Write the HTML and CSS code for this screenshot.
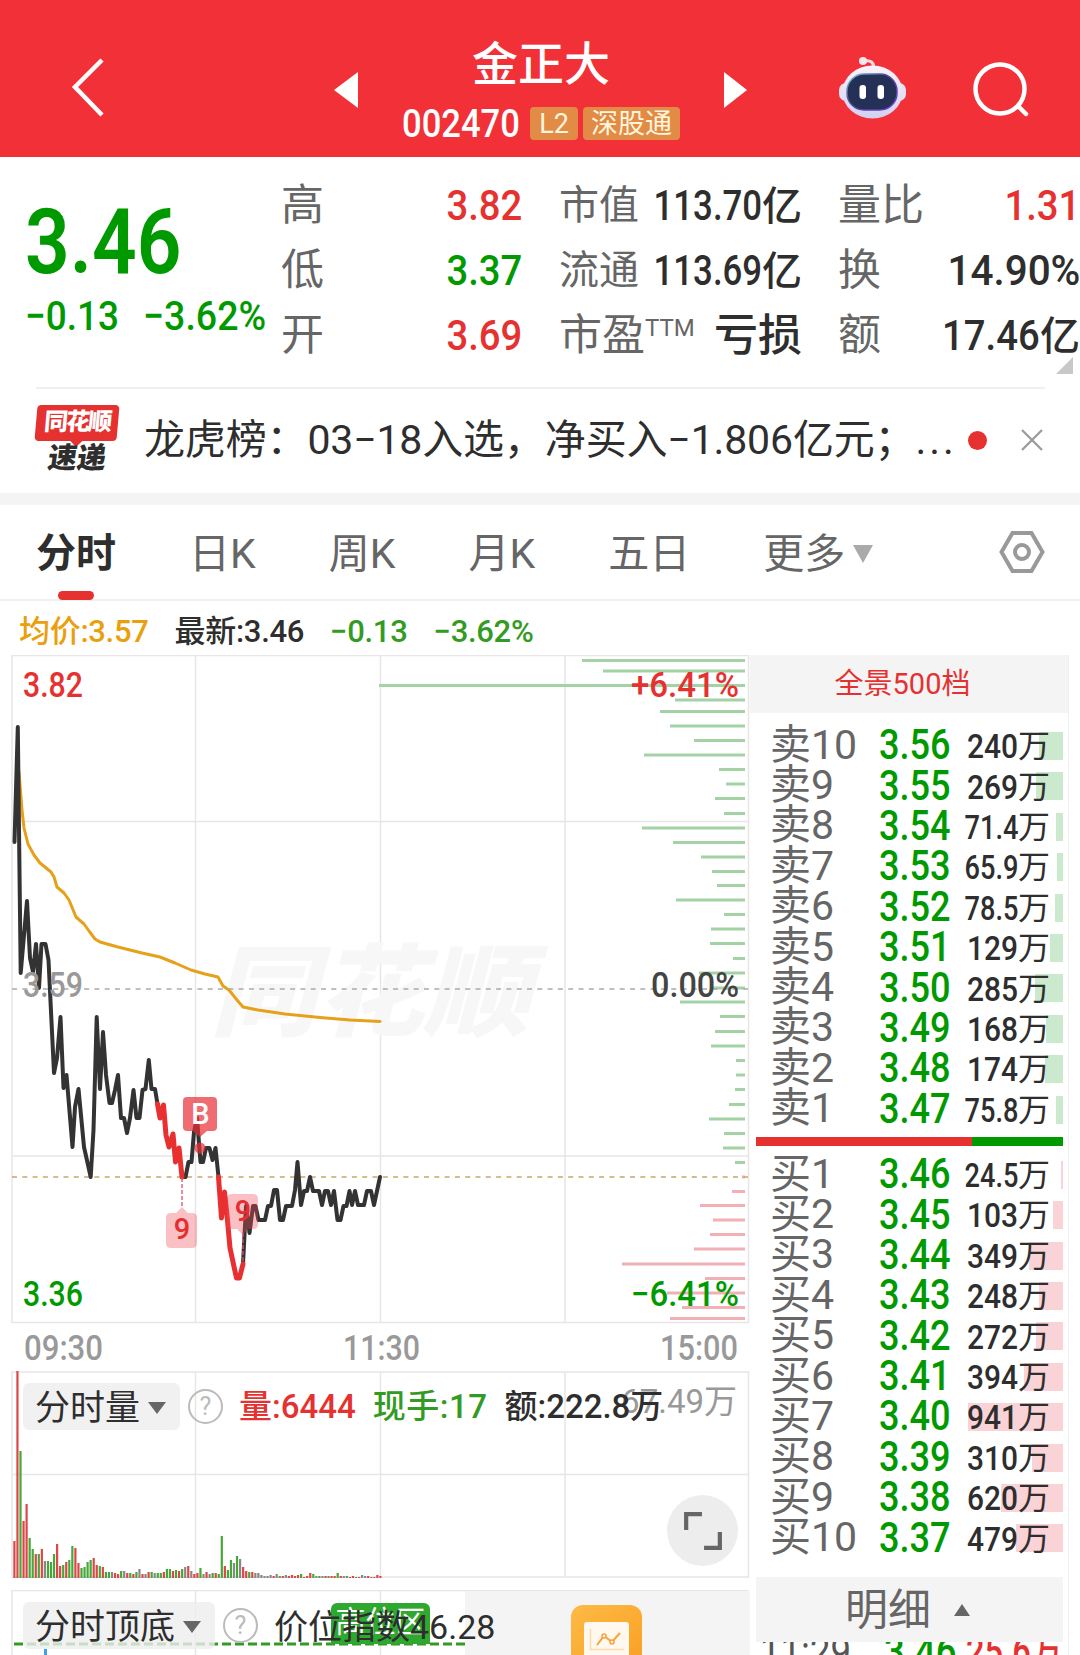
FILE: index.html
```
<!DOCTYPE html>
<html lang="zh-CN">

<head>
  <meta charset="UTF-8" />
  <meta name="viewport" content="width=device-width, initial-scale=1.0" />
  <title>金正大 002470</title>
  <link rel="stylesheet" href="styles.css">
</head>

<body>
  <header class="header">
    <svg class="back" viewBox="0 0 36 64"><path d="M32 4 L5 31 L32 59" /></svg>
    <svg class="prev" viewBox="0 0 24 36"><path d="M24 0 V36 L0 18 Z" /></svg>
    <div class="title">
      <h1>金正大</h1>
      <div class="code-row">
        <span class="code">002470</span>
        <span class="tag">L2</span>
        <span class="tag tag-wide">深股通</span>
      </div>
    </div>
    <svg class="next" viewBox="0 0 24 36"><path d="M0 0 V36 L23 18 Z" /></svg>
    <svg class="robot" viewBox="0 0 68 64">
      <defs>
        <linearGradient id="shell" x1="0" y1="0" x2="0" y2="1">
          <stop offset="0" stop-color="#fbf3fa" />
          <stop offset="1" stop-color="#d3d0f2" />
        </linearGradient>
        <linearGradient id="rim" x1="0" y1="0" x2="1" y2="1">
          <stop offset="0" stop-color="#7ed0d8" />
          <stop offset="0.4" stop-color="#4a4a90" />
          <stop offset="1" stop-color="#6a3fd8" />
        </linearGradient>
      </defs>
      <path d="M25 5 Q35 3 35 13" fill="none" stroke="#f6dbe4" stroke-width="3" />
      <circle cx="24" cy="5" r="4" fill="#fbe6ec" />
      <rect x="0" y="27" width="67" height="18" rx="7" fill="#e6e0f5" />
      <ellipse cx="33.500" cy="36" rx="30" ry="26.500" fill="url(#shell)" />
      <rect x="8" y="18" width="50" height="36" rx="17" fill="#243055" stroke="url(#rim)" stroke-width="1.500" />
      <rect x="20.500" y="29" width="6.500" height="14" rx="3" fill="#fff" />
      <rect x="38.500" y="29" width="6.500" height="14" rx="3" fill="#fff" />
    </svg>
    <svg class="search" viewBox="0 0 58 58"><circle cx="28" cy="28" r="24.500" /><path d="M46 45 L54 53" /></svg>
  </header>

  <section class="quote">
    <div class="price">
      <strong>3.46</strong>
      <p><span>−0.13</span><span>−3.62%</span></p>
    </div>
    <dl class="col col-a">
      <div><dt>高</dt><dd class="up"><b>3.82</b></dd></div>
      <div><dt>低</dt><dd class="down"><b>3.37</b></dd></div>
      <div><dt>开</dt><dd class="up"><b>3.69</b></dd></div>
    </dl>
    <dl class="col col-b">
      <div><dt>市值</dt><dd><b>113.70</b><i>亿</i></dd></div>
      <div><dt>流通</dt><dd><b>113.69</b><i>亿</i></dd></div>
      <div><dt class="pe">市盈<sup>TTM</sup></dt><dd><i>亏损</i></dd></div>
    </dl>
    <dl class="col col-c">
      <div><dt>量比</dt><dd class="up"><b>1.31</b></dd></div>
      <div><dt>换</dt><dd><b class="wide">14.90%</b></dd></div>
      <div><dt>额</dt><dd><b>17.46</b><i>亿</i></dd></div>
    </dl>
    <span class="corner"></span>
  </section>

  <section class="news">
    <div class="news-logo"><b>同花顺</b><em>速递</em></div>
    <p>龙虎榜：03−18入选，净买入−1.806亿元；<span>...</span></p>
    <span class="dot"></span>
    <svg class="close" viewBox="0 0 24 24"><path d="M2 2 L22 22 M22 2 L2 22" /></svg>
  </section>

  <nav class="tabs">
    <span class="tab active">分时</span>
    <span class="tab">日K</span>
    <span class="tab">周K</span>
    <span class="tab">月K</span>
    <span class="tab">五日</span>
    <span class="tab more">更多</span>
    <svg class="settings" viewBox="0 0 46 44">
      <path d="M13.500 3 H32.500 L43.500 22 L32.500 41 H13.500 L2.500 22 Z" />
      <circle cx="23" cy="22" r="7" />
    </svg>
  </nav>

  <div class="legend">
    <span class="avg">均价:3.57</span>
    <span>最新:3.46</span>
    <span class="fall">−0.13</span>
    <span class="fall">−3.62%</span>
  </div>

  <main class="main">
    <div class="charts">
      <svg class="minute" viewBox="0 655 750 715">
        <g class="grid">
          <path d="M12 655.500 H748.500 V1322.500 H12 Z M195.500 655 V1322 M380.500 655 V1322 M565 655 V1322 M12 821.500 H748 M12 1156 H748" />
        </g>
        <text class="watermark" x="210" y="1028" textLength="320" lengthAdjust="spacingAndGlyphs">同花顺</text>
        <g id="depth"></g>
        <path class="dash" d="M12 989 H748" />
        <path class="dash gold" d="M12 1177 H748" />
        <path class="avg-line" d="M19 772 L22 810 L24 828 L28 844 L34 855 L40 863 L51 872 L54 877 L57 887 L64 893 L69 900 L76 917 L84 924 L89 931 L95 939 L100 942 L118 947 L130 950 L142 953 L160 957 L175 963 L191 970 L205 974 L218 977 L223 986 L229 990 L237 1000 L243 1007 L258 1010 L285 1014 L320 1017.500 L350 1020 L380 1021.500" />
        <path class="price-line" d="M14.500 842 L17.800 727 L20.700 973 L27 901 L30 958 L33 972 L36 944 L39 988 L41.500 944 H45.500 L48.500 960 L54 1073 L57 1058 L60.500 1017 L63.500 1088 L66.500 1075 L72.500 1147 L75 1107 L78.500 1089 L84 1147 L90.700 1177 L93.500 1130 L96.700 1017 L100 1089 L103 1032 L106 1075 L109.500 1103 H112 L115 1090 L118 1075 L121 1118 H124 L127 1133 L130 1118 L133.500 1090 L136.500 1118 H139.500 L142.500 1090 L145.500 1089 L148.800 1060 L151.500 1089 H155 L157.500 1104" />
        <path class="price-line" d="M182 1177 H185.500 L188.500 1162 H191.500 L194 1132 L197 1118 L200.500 1162 H203 L206 1148 H209.500 L212.500 1160 L215.500 1148 L218.500 1177" />
        <path class="price-line" d="M243 1264 L246 1206 L249.500 1233 L253 1206 H255.500 L258.500 1220 H265 L268 1206 H271 L274 1190 H277 L280 1220 H283 L286 1206 H292 L295 1190 L297.500 1162 L301 1205 L304 1191 H307 L310 1177 L313 1191 H319 L322 1205 L325 1191 H328 L331 1205 L334 1191 L337.500 1220 H340.500 L343.500 1206 H346.500 L349.500 1191 L352 1205 L355 1191 L358 1205 H364 L367 1191 H371 L374 1205 L380 1177" />
        <path class="price-line hot" d="M157.500 1104 L160 1118 L163.500 1105 L166 1135 L169 1147 L173 1134 L175.500 1162 L179 1148 L182 1177" />
        <path class="price-line hot" d="M218.500 1177 L221.500 1218 L224.500 1192 L227 1215 L230 1248 L233 1262 L236.500 1278 H239.500 L243 1264" />

        <path class="pin" d="M182 1178 V1208 M243 1233 V1262" />
        <path class="nine" d="M171 1213 H176 L182 1207 L188 1213 H192 Q197 1213 197 1218 V1243 Q197 1248 192 1248 H171 Q166 1248 166 1243 V1218 Q166 1213 171 1213 Z" />
        <text class="nine-text" x="182" y="1239">9</text>
        <path class="nine" d="M232 1194 H253 Q258 1194 258 1199 V1224 Q258 1229 253 1229 H248 L243 1235 L237 1229 H232 Q227 1229 227 1224 V1199 Q227 1194 232 1194 Z" />
        <text class="nine-text" x="243" y="1221">9</text>
        <circle cx="200" cy="1148" r="5.500" class="buy-dot" />
        <path class="buy" d="M187 1097 H213 Q217 1097 217 1101 V1127 Q217 1131 213 1131 H207 L200 1137 L193 1131 H187 Q183 1131 183 1127 V1101 Q183 1097 187 1097 Z" />
        <text class="buy-text" x="200.500" y="1124">B</text>

        <text class="label up" x="23" y="697" textLength="60" lengthAdjust="spacingAndGlyphs">3.82</text>
        <text class="label gray" x="23" y="997" textLength="60" lengthAdjust="spacingAndGlyphs">3.59</text>
        <text class="label down" x="23" y="1306" textLength="60" lengthAdjust="spacingAndGlyphs">3.36</text>
        <text class="label up" x="631" y="697" textLength="108" lengthAdjust="spacingAndGlyphs">+6.41%</text>
        <text class="label dark" x="651" y="997" textLength="88" lengthAdjust="spacingAndGlyphs">0.00%</text>
        <text class="label down" x="631" y="1306" textLength="108" lengthAdjust="spacingAndGlyphs">−6.41%</text>
        <text class="label gray" x="24" y="1360" textLength="79" lengthAdjust="spacingAndGlyphs">09:30</text>
        <text class="label gray" x="343" y="1360" textLength="77" lengthAdjust="spacingAndGlyphs">11:30</text>
        <text class="label gray" x="660" y="1360" textLength="78" lengthAdjust="spacingAndGlyphs">15:00</text>
      </svg>

      <div class="panel volume">
        <svg class="panel-bg" viewBox="0 1370 750 210">
          <path class="grid" d="M12 1372 H748.500 V1577 H12 Z M195.500 1372 V1577 M380.500 1372 V1577 M565 1372 V1577 M12 1474.500 H748" />
          <g id="bars"></g>
        </svg>
        <span class="peak">67.49万</span>
        <div class="panel-head">
          <span class="picker">分时量</span>
          <span class="help">?</span>
          <span class="val up">量:6444</span>
          <span class="val fall">现手:17</span>
          <span class="val">额:222.8万</span>
        </div>
        <span class="expand">
          <svg viewBox="0 0 38 38"><path d="M18 3 H3 V18 M35 20 V35 H20" /></svg>
        </span>
      </div>

      <div class="panel top-bottom">
        <svg class="panel-bg" viewBox="0 1590 750 65">
          <defs>
            <linearGradient id="gold" x1="0" y1="0" x2="1" y2="1">
              <stop offset="0" stop-color="#fdbb45" />
              <stop offset="1" stop-color="#fa9f25" />
            </linearGradient>
          </defs>
          <path class="grid" d="M12 1655 V1590.500 H748 M195.500 1590 V1655 M380.500 1590 V1655" />
          <rect x="465" y="1591" width="285" height="64" fill="#f5f4f5" />
          <rect x="571" y="1605" width="71" height="60" rx="12" fill="url(#gold)" />
          <rect x="584" y="1622" width="45" height="40" rx="3" fill="#fff8ee" />
          <path d="M590.500 1629 V1649.500 H624" fill="none" stroke="#fbd9ac" stroke-width="1.500" />
          <path d="M597 1645 L604 1636 L612 1642 L620 1633" fill="none" stroke="#f7a23a" stroke-width="2" />
          <circle cx="604" cy="1636" r="2" class="knot" />
          <circle cx="612" cy="1642" r="2" class="knot" />
          <rect x="44" y="1649" width="3" height="6" fill="#3aa0f0" />
          <path d="M14 1644 H465" class="green-dash" />
        </svg>
        <div class="panel-head">
          <span class="picker">分时顶底</span>
          <span class="help">?</span>
          <span class="val index">价位指数46.28</span>
        </div>
        <span class="zone">高位区</span>
      </div>
    </div>

    <aside class="book">
      <div class="book-title">全景500档</div>
      <div class="orders sell" id="sell"></div>
      <div class="ratio"><span></span></div>
      <div class="orders buys" id="buys"></div>
      <div class="detail-title">明细<span></span></div>
      <div class="tick"><span>11:29</span><span class="down">3.46</span><span class="up">25.6<i>万</i></span></div>
    </aside>
  </main>

  <script src="script.js"></script>
</body>

</html>
```
FILE: styles.css
```
* {
  box-sizing: border-box;
  margin: 0;
  padding: 0;
}

body {
  width: 1080px;
  height: 1655px;
  overflow: hidden;
  background: #fff;
  color: #2e2e2e;
  font-family: Roboto, 'Noto Sans CJK SC', sans-serif;
  line-height: 1;
}

i,
em {
  font-style: normal;
}

.up {
  color: #e63131;
}

.down {
  color: #009a00;
}

.fall {
  color: #339b24;
}

/* Header */
.header {
  height: 157px;
  background: #f23037;
  color: #fff;
  display: flex;
  align-items: flex-start;
}

.header svg {
  flex: none;
}

.back {
  width: 36px;
  height: 64px;
  margin: 56px 0 0 70px;
}

.back path,
.search path,
.search circle {
  fill: none;
  stroke: #fff;
  stroke-width: 4.5;
}

.search path {
  stroke-linecap: round;
}

.prev,
.next {
  width: 24px;
  height: 36px;
  margin-top: 72px;
  fill: #fff;
}

.prev {
  margin-left: 228px;
}

.title {
  width: 366px;
  padding-top: 39px;
  text-align: center;
}

h1 {
  font-size: 46px;
  font-weight: 500;
  line-height: 50px;
}

.code-row {
  display: flex;
  align-items: center;
  gap: 5px;
  margin-top: 17px;
  padding-left: 44px;
  height: 35px;
}

.code {
  width: 123px;
  font-size: 38px;
  font-weight: 500;
  transform: scaleX(0.91);
  transform-origin: left;
}

.tag {
  width: 48px;
  height: 33px;
  border-radius: 4px;
  background: #e28b47;
  color: #fff6dc;
  font-size: 27px;
  line-height: 34px;
}

.tag-wide {
  width: 97px;
}

.robot {
  width: 68px;
  height: 64px;
  margin: 56px 0 0 91px;
}

.search {
  width: 58px;
  height: 58px;
  margin: 61px 0 0 65px;
}

/* Quote */
.quote {
  position: relative;
  height: 230px;
  display: flex;
}

.price {
  width: 281px;
  padding: 40px 0 0 25px;
  color: #009a00;
}

.price strong {
  display: block;
  font-size: 91px;
  font-weight: 600;
  transform: scaleX(0.86);
  transform-origin: left;
}

.price p {
  display: flex;
  gap: 14px;
  margin-top: 8px;
  font-size: 41px;
  font-weight: 500;
  white-space: nowrap;
}

.price p span {
  transform: scaleX(0.9);
  transform-origin: left;
}

.price p span:last-child {
  transform: scaleX(0.915);
}

.col {
  padding-top: 16px;
}

.col div {
  display: flex;
  justify-content: space-between;
  align-items: center;
  height: 65px;
}

.col dt {
  color: #666;
  font-size: 43px;
  white-space: nowrap;
}

.col dd {
  font-size: 43px;
  font-weight: 500;
  white-space: nowrap;
}

.col dd b {
  display: inline-block;
  font-weight: 500;
  transform: scaleX(0.89);
  transform-origin: right;
}

.col dd b.wide {
  transform: scaleX(0.94);
}

.col i {
  font-size: 40px;
}

.col-a {
  width: 241px;
}

.col-b {
  width: 243px;
  margin-left: 37px;
}

.col-b dt {
  width: 60px;
  font-size: 40px;
}

.col-b dt.pe {
  font-size: 43px;
}

.col-b dd b {
  transform: scaleX(0.81);
}

.col-b sup {
  font-size: 24px;
  vertical-align: 14px;
  line-height: 0;
}

.col-b .pe + dd i {
  font-size: 44px;
}

.col-c {
  width: 242px;
  margin-left: 36px;
}

.corner {
  position: absolute;
  right: 7px;
  bottom: 13px;
  border-left: 17px solid transparent;
  border-bottom: 17px solid #c8c8c8;
}

/* News */
.news {
  height: 118px;
  border-bottom: 12px solid #f4f4f4;
  display: flex;
  align-items: center;
  padding: 0 36px;
  position: relative;
}

.news::before {
  content: '';
  position: absolute;
  left: 36px;
  right: 35px;
  top: 0;
  border-top: 2px solid #f0f0f0;
}

.news-logo {
  width: 82px;
  margin-right: 26px;
  text-align: center;
}

.news-logo b {
  position: relative;
  display: block;
  height: 36px;
  border-radius: 4px;
  background: #e63131;
  color: #fff;
  font-size: 24px;
  font-weight: 900;
  line-height: 34px;
  letter-spacing: -2px;
  transform: skewX(-5deg);
}

.news-logo b::after {
  content: '';
  position: absolute;
  left: 36px;
  bottom: -6px;
  border: 6px solid transparent;
  border-top-color: #e63131;
  border-bottom: 0;
}

.news-logo em {
  display: block;
  font-size: 29px;
  font-weight: 900;
  line-height: 35px;
  transform: skewX(-8deg);
}

.news p {
  width: 812px;
  font-size: 41px;
  letter-spacing: -0.15px;
  white-space: nowrap;
  padding-top: 1px;
}

.news p span {
  letter-spacing: 3px;
}

.dot {
  width: 19px;
  height: 19px;
  border-radius: 50%;
  background: #e63131;
  margin-left: 12px;
}

.close {
  width: 24px;
  height: 24px;
  margin-left: auto;
  fill: none;
  stroke: #999;
  stroke-width: 2.2;
}

/* Tabs */
.tabs {
  height: 96px;
  border-bottom: 2px solid #f0f0f0;
  display: flex;
  align-items: center;
  padding: 0 35px 0 36px;
  color: #666;
  font-size: 41px;
}

.tab {
  position: relative;
  top: 2px;
  margin-right: 73px;
  white-space: nowrap;
}

.tab.active {
  color: #2e2e2e;
  font-size: 40px;
  font-weight: 700;
  margin-right: 73px;
}

.tab.active::after {
  content: '';
  position: absolute;
  left: 22px;
  bottom: -26px;
  width: 36px;
  height: 9px;
  border-radius: 5px;
  background: #e63131;
}

.more {
  margin-right: 0;
  display: flex;
  align-items: center;
  gap: 8px;
}

.more::after {
  content: '';
  border: 10px solid transparent;
  border-top: 18px solid #aaa;
  border-bottom: 0;
}

.settings {
  width: 46px;
  height: 44px;
  margin-left: auto;
  fill: none;
  stroke: #999;
  stroke-width: 4;
}

.legend {
  height: 54px;
  padding: 15px 0 0 19px;
  display: flex;
  gap: 26px;
  font-size: 31px;
  font-weight: 500;
  letter-spacing: -0.3px;
}

.avg {
  color: #e9a00c;
}

/* Charts */
.main {
  display: flex;
}

.charts {
  width: 750px;
}

.charts svg {
  display: block;
}

.minute {
  width: 750px;
  height: 715px;
}

.grid {
  fill: none;
  stroke: #e6e6e6;
  stroke-width: 1.5;
}

.watermark {
  font-size: 100px;
  font-weight: 900;
  font-style: italic;
  fill: #f7f7f7;
}

.dash {
  stroke: #aaa;
  stroke-width: 1.6;
  stroke-dasharray: 5 5.300;
}

.gold {
  stroke: #c9a765;
}

.price-line,
.avg-line {
  fill: none;
  stroke: #333;
  stroke-width: 4;
  stroke-linejoin: round;
  stroke-linecap: round;
}

.avg-line {
  stroke: #e5a11a;
  stroke-width: 3;
}

.hot {
  stroke: #e93030;
  stroke-width: 5;
}

.label {
  font-size: 35px;
  font-weight: 500;
}

.label.up {
  fill: #e63131;
}

.label.down {
  fill: #009a00;
}

.label.gray {
  fill: #999;
}

.label.dark {
  fill: #444;
}

.pin {
  stroke: #e0506a;
  stroke-width: 1.3;
  stroke-dasharray: 4 2;
}

.nine {
  fill: #f04b53;
  fill-opacity: 0.35;
}

.nine-text,
.buy-text {
  font-size: 29px;
  font-weight: 500;
  text-anchor: middle;
  fill: #e62e2e;
}

.buy,
.buy-dot {
  fill: #e92e38;
  fill-opacity: 0.7;
}

.buy-text {
  fill: #fff;
}

.panel {
  position: relative;
}

.panel-bg {
  position: absolute;
  left: 0;
  top: 0;
  width: 750px;
}

.volume {
  height: 220px;
  padding-top: 13px;
}

.top-bottom {
  height: 65px;
  padding-top: 12px;
}

.panel-head {
  position: relative;
  z-index: 1;
  display: flex;
  align-items: center;
  margin-left: 23px;
  height: 47px;
  white-space: nowrap;
}

.picker {
  height: 47px;
  padding: 3px 14px 0 12px;
  border-radius: 6px;
  background: rgba(237, 237, 237, 0.8);
  display: flex;
  align-items: center;
  gap: 8px;
  font-size: 35px;
}

.picker::after {
  content: '';
  border: 9px solid transparent;
  border-top: 12px solid #666;
  border-bottom: 0;
}

.help {
  width: 35px;
  height: 35px;
  margin: 0 16px 0 8px;
  border: 2.5px solid #bbb;
  border-radius: 50%;
  color: #bbb;
  font-size: 25px;
  line-height: 31px;
  text-align: center;
}

.val {
  font-size: 33px;
  font-weight: 500;
  margin-right: 17px;
}

.val.fall {
  letter-spacing: 0.5px;
}

.val.index {
  font-size: 34px;
  font-weight: 400;
  padding-top: 2px;
}

.peak {
  position: absolute;
  right: 13px;
  top: 15px;
  color: #999;
  font-size: 33px;
}

.expand {
  position: absolute;
  right: 12px;
  top: 125px;
  width: 71px;
  height: 71px;
  border-radius: 50%;
  background: #ededed;
  display: flex;
  align-items: center;
  justify-content: center;
}

.expand svg {
  width: 40px;
  height: 40px;
  fill: none;
  stroke: #666;
  stroke-width: 4;
}

.zone {
  position: absolute;
  left: 331px;
  top: 13px;
  width: 99px;
  height: 41px;
  border-radius: 6px 6px 0 0;
  background: #2ea82e;
  color: #fff;
  font-size: 30px;
  line-height: 38px;
  text-align: center;
}

.green-dash {
  stroke: #339b24;
  stroke-width: 3;
  stroke-dasharray: 9 4;
}

.knot {
  fill: #fff8ee;
  stroke: #f7a23a;
  stroke-width: 1.5;
}

/* Order book */
.book {
  width: 319px;
  height: 1000px;
  overflow: hidden;
  border-right: 1px solid #f0f0f0;
}

.book-title {
  height: 58px;
  background: #f4f4f4;
  color: #e63131;
  font-size: 29px;
  line-height: 59px;
  text-align: center;
  padding-right: 13px;
}

.orders {
  padding: 12px 5px 0 20px;
}

.orders.buys {
  padding-top: 8px;
}

.order {
  position: relative;
  display: flex;
  align-items: center;
  height: 40.4px;
  white-space: nowrap;
}

.order .name {
  width: 109px;
  color: #666;
  font-size: 41px;
}

.order .cost {
  width: 74px;
  color: #009a00;
  font-size: 42px;
  font-weight: 500;
  transform: scaleX(0.86);
  transform-origin: left;
}

.order .amount {
  position: relative;
  top: 1px;
  width: 97px;
  display: flex;
  justify-content: flex-end;
  align-items: center;
  font-size: 34px;
  font-weight: 500;
}

.order .amount b {
  font-weight: 500;
  transform: scaleX(0.88);
  transform-origin: right;
}

.order .amount .decimal {
  transform: scaleX(0.8);
}

.order .amount i {
  font-size: 32px;
  font-weight: 400;
}

.order .bar {
  position: absolute;
  right: 0;
  top: 7px;
  height: 28px;
  background: #cbe9cd;
}

.buys .bar {
  background: #f9d3d6;
}

.ratio {
  height: 9px;
  margin: 8px 5px 0 6px;
  background: #009a00;
}

.ratio span {
  display: block;
  width: 216px;
  height: 9px;
  background: #e63131;
}

.detail-title {
  position: relative;
  z-index: 1;
  height: 65px;
  margin: 19px 5px 0 6px;
  background: #f4f4f4;
  color: #666;
  font-size: 43px;
  display: flex;
  align-items: center;
  padding: 2px 0 0 89px;
}

.detail-title span {
  margin-left: 23px;
  border: 8px solid transparent;
  border-bottom: 12px solid #666;
  border-top: 0;
}

.tick {
  display: flex;
  margin-top: -11px;
  padding-left: 10px;
  font-size: 42px;
  font-weight: 500;
  white-space: nowrap;
}

.tick span {
  flex: none;
  transform: scaleX(0.87);
  transform-origin: left;
}

.tick span:first-child {
  width: 124px;
  color: #555;
  font-weight: 400;
}

.tick span:nth-child(2) {
  width: 82px;
}

.tick span:nth-child(3) {
  transform: scaleX(0.78);
}

.tick i {
  font-size: 40px;
}
```
FILE: script.js
```
const sell = [
  ['卖10', '3.56', '240', 24], ['卖9', '3.55', '269', 27], ['卖8', '3.54', '71.4', 7],
  ['卖7', '3.53', '65.9', 6], ['卖6', '3.52', '78.5', 8], ['卖5', '3.51', '129', 13],
  ['卖4', '3.50', '285', 28], ['卖3', '3.49', '168', 17], ['卖2', '3.48', '174', 18],
  ['卖1', '3.47', '75.8', 7]
];

const buys = [
  ['买1', '3.46', '24.5', 2], ['买2', '3.45', '103', 10], ['买3', '3.44', '349', 34],
  ['买4', '3.43', '248', 24], ['买5', '3.42', '272', 27], ['买6', '3.41', '394', 39],
  ['买7', '3.40', '941', 95], ['买8', '3.39', '310', 31], ['买9', '3.38', '620', 62],
  ['买10', '3.37', '479', 47]
];

function renderOrders(id, rows) {
  document.getElementById(id).innerHTML = rows.map(([name, cost, amount, bar]) => `
    <div class="order">
      <span class="bar" style="width: ${bar}px"></span>
      <span class="name">${name}</span>
      <span class="cost">${cost}</span>
      <span class="amount"><b class="${amount.includes('.') ? 'decimal' : ''}">${amount}</b><i>万</i></span>
    </div>`).join('');
}

renderOrders('sell', sell);
renderOrders('buys', buys);

// volume by price: [y, width]
const asks = [
  [660.5, 163], [671, 142], [685.5, 366], [700, 70], [711.5, 85], [726, 75], [740.5, 51],
  [755, 101], [769.5, 26], [784, 19], [798.5, 30], [813.5, 21], [828, 103], [842.5, 72],
  [857, 44], [871.5, 33], [885.5, 28], [900, 69], [914.5, 21], [929, 34], [943.5, 35],
  [958.5, 12], [973, 46], [988, 34], [1002, 65], [1016.5, 25], [1031.5, 30], [1046, 34],
  [1060.5, 9], [1075, 9], [1089.5, 10], [1104.5, 16], [1119, 36], [1133.5, 21], [1148, 22],
  [1162.5, 10]
];
const bids = [
  [1177, 3], [1191.5, 13], [1205.5, 45], [1220, 32], [1234.5, 35], [1249, 51], [1264, 123],
  [1278.5, 40], [1293, 78], [1307.5, 63], [1318.5, 75]
];
const line = color => ([y, w]) =>
  `<rect x="${745 - w}" y="${y - 1.5}" width="${w}" height="3" fill="${color}" />`;
document.getElementById('depth').innerHTML =
  asks.map(line('#a3d3a5')).join('') + bids.map(line('#f0b0b5')).join('');

// minute volume, r = up, g = down, x = flat
const volume = ('r37 r207 g127 r57 r74 g40 g29 r24 g24 r29 x17 g17 g16 g24 r34 r12 g13 r16 g18 g32 r30 r15 ' +
  'g10 g11 g16 g18 r20 r13 g12 r11 g6 g6 x6 r5 r4 g7 x7 r5 g5 r4 g6 x9 r4 x4 r6 g6 x5 g5 g5 r6 g9 g9 r7 g8 ' +
  'r7 g9 x11 r12 x7 r4 r5 g10 x4 r6 x4 g5 r5 g4 g42 r12 g8 g18 x15 g22 x19 r11 r7 g6 r6 x5 x5 x3 x2 x2 x3 ' +
  'r2 x4 g2 r2 x3 r2 r3 r2 r3 g4 r1 r2 r5 g4 x2 g2 x2 r2 g2 r2 r2 g5 r2 x2 g2 r1 r2 g1 r1 x3 x2 r2 g1 r1 r3 r2').split(' ');
const tone = { r: '#dc4848', g: '#46a838', x: '#888' };
document.getElementById('bars').innerHTML = volume.map((v, i) => {
  const h = Number(v.slice(1));
  return `<rect x="${13.3 + i * 3.05}" y="${1578 - h}" width="2.2" height="${h}" fill="${tone[v[0]]}" />`;
}).join('');
```
